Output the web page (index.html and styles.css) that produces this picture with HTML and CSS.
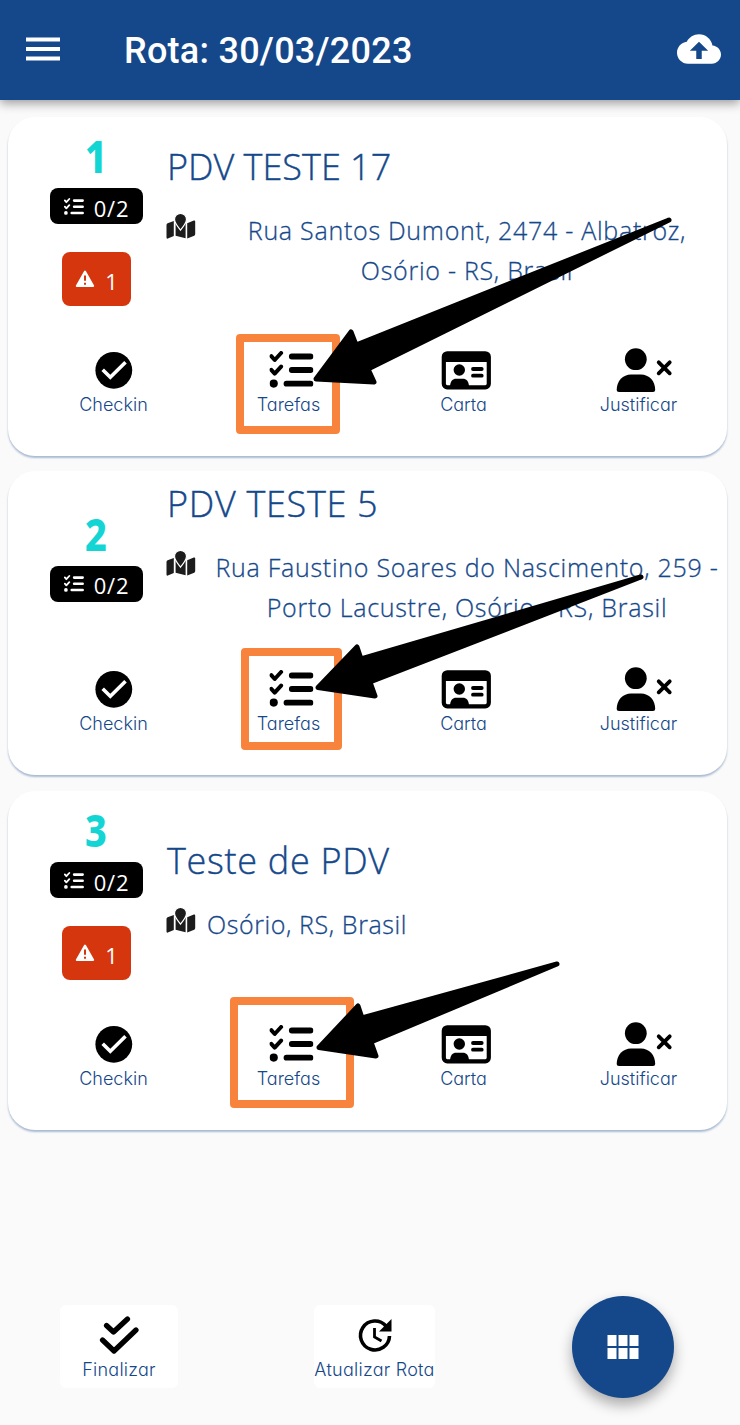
FILE: index.html
```
<!DOCTYPE html>
<html lang="pt-BR">

<head>
    <meta charset="UTF-8">
    <meta name="viewport" content="width=device-width, initial-scale=1.0">
    <title>Rota</title>
    <link rel="stylesheet" href="styles.css">
</head>

<body>
    <!-- icones -->
    <svg class="sprite" width="0" height="0">
        <symbol id="icon-list" viewBox="0 0 44 37">
            <path d="M1.8 5.2L5.2 9L11.6 2M1.8 18.8L5.2 22.6L11.6 15.6" fill="none" stroke="currentColor" stroke-width="4" stroke-linecap="round" stroke-linejoin="round" />
            <circle cx="4.2" cy="32.6" r="4.1" fill="currentColor" />
            <path d="M22.3 5.5H41M22.3 19H41M17 32.7H41" fill="none" stroke="currentColor" stroke-width="5.8" stroke-linecap="round" />
        </symbol>
        <symbol id="icon-checkin" viewBox="0 0 72 48">
            <circle cx="36.8" cy="25.3" r="18.4" fill="currentColor" />
            <path d="M25.7 24.7L33.3 32.3L48.5 17.3" fill="none" stroke="#fff" stroke-width="3.6" />
        </symbol>
        <symbol id="icon-tarefas" viewBox="0 0 72 48">
            <use href="#icon-list" x="17.5" y="6" width="44" height="37" />
        </symbol>
        <symbol id="icon-carta" viewBox="0 0 72 48">
            <rect x="16.8" y="8.3" width="45" height="34" rx="3.5" fill="none" stroke="currentColor" stroke-width="4.2" />
            <path d="M16 8H62V17H16Z" fill="currentColor" />
            <circle cx="32.3" cy="25" r="5.7" fill="currentColor" />
            <path d="M23 42C23 36 26 33.8 29 33.8H36C39 33.8 42 36 42 42Z" fill="currentColor" />
            <path d="M46 24H54.7M46 30.7H54.7" fill="none" stroke="currentColor" stroke-width="3.8" stroke-linecap="round" />
        </symbol>
        <symbol id="icon-justificar" viewBox="0 0 72 48">
            <circle cx="33.8" cy="14.2" r="10.9" fill="currentColor" />
            <path d="M14.7 45C14.7 36 21 29.6 29 29.6H39C47 29.6 53.2 36 53.2 45Q53.2 47 51 47H17Q14.7 47 14.7 45Z" fill="currentColor" />
            <path d="M56.7 17.3L67.7 28.3M67.7 17.3L56.7 28.3" fill="none" stroke="currentColor" stroke-width="3.8" stroke-linecap="round" />
        </symbol>
        <symbol id="icon-map" viewBox="0 0 30 28">
            <path d="M.5 12Q.5 10.800 1.600 10.300L7.800 8V23L1.800 25.500Q.5 26 .5 24.500ZM9.600 10.500L14.300 17L19.600 10.500V25.300L9.600 22.800ZM21.200 10.300L27.800 7.500Q29.200 7 29.200 8.500V21Q29.200 22.300 28.200 22.700L21.200 25.500Z" fill="currentColor" />
            <path d="M14.500 17.200C11.500 13.500 8.500 9.800 8.500 6.300A6 6 0 0 1 20.500 6.300C20.500 9.800 17.500 13.500 14.500 17.200Z" fill="currentColor" stroke="#fff" stroke-width="1.200" />
        </symbol>
        <symbol id="icon-warning" viewBox="0 0 20 18">
            <path d="M10 1.500L18.200 16H1.800Z" fill="#fff" stroke="#fff" stroke-width="2" stroke-linejoin="round" />
            <path d="M10 5.500V10.700M10 12.700V14.700" stroke="#d6360e" stroke-width="2" />
        </symbol>
    </svg>

    <header class="header">
        <svg class="menu-icon" width="34" height="25" viewBox="0 0 34 25">
            <path d="M0 2.500H34M0 12H34M0 21.500H34" stroke="#fff" stroke-width="4.200" />
        </svg>
        <h1>Rota: 30/03/2023</h1>
        <svg class="cloud-icon" width="44" height="30" viewBox="0 4 24 16">
            <path d="M19.350 10.040C18.670 6.590 15.640 4 12 4 9.110 4 6.600 5.640 5.350 8.040 2.340 8.360 0 10.910 0 14c0 3.310 2.690 6 6 6h13c2.760 0 5-2.240 5-5 0-2.640-2.050-4.780-4.650-4.960zM13.500 13v4.500h-3V13H7l5-5 5 5h-3z" fill="#fff" />
        </svg>
    </header>

    <main class="route-list">
        <section class="card">
            <div class="card-info">
                <div class="status">
                    <div class="order">1</div>
                    <div class="task-badge"><svg width="20" height="17"><use href="#icon-list" /></svg><span>0/2</span></div>
                    <div class="alert-badge"><svg width="20" height="18"><use href="#icon-warning" /></svg><span>1</span></div>
                </div>
                <div class="store">
                    <h2 class="long">PDV TESTE 17</h2>
                    <div class="address">
                        <svg width="30" height="28"><use href="#icon-map" /></svg>
                        <p>Rua Santos Dumont, 2474 - Albatroz,<br>Osório - RS, Brasil</p>
                    </div>
                </div>
            </div>
            <div class="actions">
                <div class="action"><svg><use href="#icon-checkin" /></svg><span>Checkin</span></div>
                <div class="action"><svg><use href="#icon-tarefas" /></svg><span>Tarefas</span></div>
                <div class="action"><svg><use href="#icon-carta" /></svg><span>Carta</span></div>
                <div class="action"><svg><use href="#icon-justificar" /></svg><span>Justificar</span></div>
            </div>
        </section>

        <section class="card compact">
            <div class="card-info">
                <div class="status">
                    <div class="order">2</div>
                    <div class="task-badge"><svg width="20" height="17"><use href="#icon-list" /></svg><span>0/2</span></div>
                </div>
                <div class="store">
                    <h2>PDV TESTE 5</h2>
                    <div class="address">
                        <svg width="30" height="28"><use href="#icon-map" /></svg>
                        <p>Rua Faustino Soares do Nascimento, 259 -<br>Porto Lacustre, Osório - RS, Brasil</p>
                    </div>
                </div>
            </div>
            <div class="actions">
                <div class="action"><svg><use href="#icon-checkin" /></svg><span>Checkin</span></div>
                <div class="action"><svg><use href="#icon-tarefas" /></svg><span>Tarefas</span></div>
                <div class="action"><svg><use href="#icon-carta" /></svg><span>Carta</span></div>
                <div class="action"><svg><use href="#icon-justificar" /></svg><span>Justificar</span></div>
            </div>
        </section>

        <section class="card">
            <div class="card-info">
                <div class="status">
                    <div class="order">3</div>
                    <div class="task-badge"><svg width="20" height="17"><use href="#icon-list" /></svg><span>0/2</span></div>
                    <div class="alert-badge"><svg width="20" height="18"><use href="#icon-warning" /></svg><span>1</span></div>
                </div>
                <div class="store">
                    <h2>Teste de PDV</h2>
                    <div class="address short">
                        <svg width="30" height="28"><use href="#icon-map" /></svg>
                        <p>Osório, RS, Brasil</p>
                    </div>
                </div>
            </div>
            <div class="actions">
                <div class="action"><svg><use href="#icon-checkin" /></svg><span>Checkin</span></div>
                <div class="action"><svg><use href="#icon-tarefas" /></svg><span>Tarefas</span></div>
                <div class="action"><svg><use href="#icon-carta" /></svg><span>Carta</span></div>
                <div class="action"><svg><use href="#icon-justificar" /></svg><span>Justificar</span></div>
            </div>
        </section>
    </main>

    <footer class="footer">
        <div class="footer-button finish">
            <svg width="42" height="40" viewBox="0 0 42 40">
                <path d="M8.500 11.500L15.500 18L29.500 5M4.500 26L16 37L38 16" fill="none" stroke="#000" stroke-width="5.200" stroke-linecap="round" stroke-linejoin="round" />
            </svg>
            <span>Finalizar</span>
        </div>
        <div class="footer-button refresh">
            <svg width="42" height="40" viewBox="0 0 42 40">
                <path d="M32 12A14.500 14.500 0 1 0 35.500 22" fill="none" stroke="#000" stroke-width="3.600" />
                <path d="M37.500 5V17.500H25Z" fill="#000" />
                <path d="M20.500 14V23L27.500 27" fill="none" stroke="#000" stroke-width="2.800" />
            </svg>
            <span>Atualizar Rota</span>
        </div>
        <div class="fab">
            <svg width="32" height="24" viewBox="0 0 32 24">
                <path d="M.5 0H9.500V11H.5ZM11.500 0H20.500V11H11.500ZM22.500 0H31.500V11H22.500ZM.5 13H9.500V24H.5ZM11.500 13H20.500V24H11.500ZM22.500 13H31.500V24H22.500Z" fill="#fff" />
            </svg>
        </div>
    </footer>

    <!-- destaques e setas sobre o botao Tarefas -->
    <svg class="highlights" width="740" height="1425" viewBox="0 0 740 1425">
        <g class="frame">
            <rect x="240" y="338" width="96" height="92" />
            <rect x="245" y="652" width="93" height="94" />
            <rect x="234" y="1001" width="116" height="103" />
        </g>
        <g class="arrow">
            <path d="M316 379L351 332L356 345L669 220L368 369L374 382Z" />
            <path d="M318 687.500L357 647L361 659L641 577L370 682L375 696Z" />
            <path d="M319 1047.500L358 1006L362 1018L557 964L371 1042L376 1056Z" />
        </g>
    </svg>
</body>

</html>
```

FILE: styles.css
```
* {
    box-sizing: border-box;
}

body {
    margin: 0;
    height: 1425px;
    position: relative;
    overflow: hidden;
    background-color: #fafafa;
    color: #15488a;
    font-family: 'Open Sans', 'Noto Sans', sans-serif;
}

.sprite {
    position: absolute;
}

.header {
    height: 100px;
    padding: 0 19px 2px 26px;
    display: flex;
    align-items: center;
    background-color: #15488a;
    box-shadow: 0 3px 10px rgba(0, 0, 0, 0.4);
}

h1 {
    flex: 1;
    margin: 3px 0 0 64px;
    color: white;
    font-family: Roboto, sans-serif;
    font-size: 36px;
    font-weight: 500;
    letter-spacing: 0.25px;
}

.menu-icon,
.cloud-icon {
    display: block;
}

.route-list {
    height: 1030px;
    padding: 17px 13px 0 8px;
    display: flex;
    flex-direction: column;
    gap: 15px;
}

.card {
    height: 339px;
    padding-left: 18px;
    background-color: white;
    border-radius: 27px;
    box-shadow: 0 2px 2px rgba(21, 72, 138, 0.35);
}

.card.compact {
    height: 304px;
    margin-bottom: 1px;
}

.card-info {
    height: 228px;
    display: flex;
    align-items: center;
}

.compact .card-info {
    height: 193px;
}

.status {
    width: 141px;
    padding-bottom: 15px;
    display: flex;
    flex-direction: column;
    align-items: center;
}

.order {
    height: 32px;
    margin-bottom: 15px;
    color: #13d5d4;
    font-family: 'Noto Sans', sans-serif;
    font-size: 45px;
    font-weight: 800;
    line-height: 30px;
    transform: scaleX(0.84);
}

.task-badge,
.alert-badge {
    display: flex;
    align-items: center;
    justify-content: center;
    gap: 10px;
    color: white;
    border-radius: 8px;
    font-size: 22px;
}

.task-badge {
    width: 93px;
    height: 36px;
    background-color: black;
    letter-spacing: 0.8px;
}

.task-badge span,
.alert-badge span {
    padding-top: 3px;
}

.alert-badge {
    width: 69px;
    height: 54px;
    margin-top: 28px;
    background-color: #d6360e;
}

.store {
    flex: 1;
    padding-bottom: 27px;
    white-space: nowrap;
}

h2 {
    margin: 1px 0 22px;
    font-size: 36px;
    font-weight: 300;
    line-height: 44px;
    letter-spacing: 0.7px;
    -webkit-text-stroke: 0.4px #15488a;
}

h2.long {
    letter-spacing: 0;
}

.address {
    display: flex;
    gap: 11px;
}

.address svg {
    margin-top: 2px;
    margin-left: -1px;
    color: #1c1c1c;
}

.address p {
    flex: 1;
    margin: -1px 0 1px;
    font-size: 25px;
    font-weight: 300;
    line-height: 40px;
    letter-spacing: 0.73px;
    text-align: center;
    -webkit-text-stroke: 0.3px #15488a;
}

.address.short p {
    text-align: left;
    letter-spacing: 0.6px;
}

.actions {
    width: 700px;
    display: flex;
}

.action {
    width: 175px;
    display: flex;
    flex-direction: column;
    align-items: center;
    color: black;
}

.action svg {
    width: 72px;
    height: 48px;
    margin-right: 1px;
}

.action span,
.footer-button span {
    color: #15488a;
    font-family: Inter, sans-serif;
    font-feature-settings: 'cv11';
    font-size: 18px;
    font-weight: 300;
    line-height: 24px;
    white-space: nowrap;
}

.footer {
    height: 295px;
    padding: 166px 66px 0 60px;
    display: flex;
}

.footer-button {
    width: 118px;
    height: 83px;
    margin-top: 9px;
    padding-top: 9px;
    display: flex;
    flex-direction: column;
    align-items: center;
    background-color: white;
    border-radius: 6px;
}

.footer-button svg {
    flex-shrink: 0;
    margin-bottom: 4px;
}

.footer-button span {
    letter-spacing: 0.25px;
}

.refresh {
    width: 121px;
    margin-left: 136px;
}

.fab {
    width: 102px;
    height: 102px;
    margin-left: auto;
    display: flex;
    align-items: center;
    justify-content: center;
    background-color: #15488a;
    border-radius: 50%;
    box-shadow: 0 7px 14px rgba(0, 0, 0, 0.32);
}

.highlights {
    position: absolute;
    top: 0;
    left: 0;
}

.frame {
    fill: none;
    stroke: #f8833c;
    stroke-width: 8px;
    stroke-linejoin: round;
}

.arrow {
    fill: black;
    stroke: black;
    stroke-width: 5px;
    stroke-linejoin: round;
}
```
